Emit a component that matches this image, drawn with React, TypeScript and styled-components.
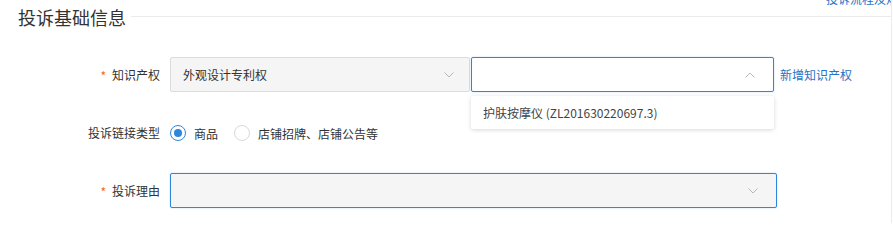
import React from "react";
import styled, { createGlobalStyle } from "styled-components";

const Global = createGlobalStyle`
  html, body { margin: 0; padding: 0; background: #fff; }
  body { font-family: "Noto Sans CJK SC", "Noto Sans", sans-serif; color: #333; }
`;

const BLUE = "#2f87dc";
const LINK = "#2672c6";

const Page = styled.div`
  position: relative;
  width: 891px;
  height: 223px;
  border-right: 1px solid #ececec;
  overflow: hidden;
`;

const TopLink = styled.a`
  position: absolute;
  top: -9px;
  left: 826px;
  font-size: 12px;
  line-height: 16px;
  color: ${LINK};
  white-space: nowrap;
  text-decoration: none;
`;

const Header = styled.div`
  display: flex;
  align-items: center;
  padding: 5px 0 0 18px;
  height: 24px;
`;

const Title = styled.h2`
  margin: 0;
  font-size: 18px;
  line-height: 24px;
  font-weight: 400;
  color: #333;
  white-space: nowrap;
`;

const Rule = styled.div`
  flex: 1;
  margin-left: 5px;
  margin-top: -2px;
  border-top: 1px solid #ebebeb;
`;

const Form = styled.div`
  display: flex;
  flex-direction: column;
`;

const Item = styled.div<{ $mt: number; $h: number }>`
  display: flex;
  align-items: center;
  margin-top: ${(p) => p.$mt}px;
  height: ${(p) => p.$h}px;
`;

const Label = styled.div`
  width: 160px;
  flex: none;
  display: flex;
  justify-content: flex-end;
  align-items: center;
  font-size: 12px;
  line-height: 16px;
  color: #333;
  white-space: nowrap;
  margin-right: 10px;
`;

const Star = styled.span`
  color: #f60;
  font-size: 12px;
  margin-right: 6px;
  line-height: 12px;
  padding-top: 3px;
`;

const SelectBox = styled.div<{ $w: number; $active?: boolean; $bg?: string }>`
  position: relative;
  box-sizing: border-box;
  width: ${(p) => p.$w}px;
  height: 35px;
  display: flex;
  align-items: center;
  padding: 0 12px;
  background: ${(p) => p.$bg || "#f5f5f5"};
  border: 1px solid ${(p) => (p.$active ? BLUE : "#dcdcdc")};
  border-radius: 2px;
  font-size: 12px;
  color: #333;
  ${(p) => (p.$active ? "box-shadow: 0 0 2px rgba(47,135,220,0.35);" : "")}
`;

const SelectText = styled.span`
  flex: 1;
  white-space: nowrap;
`;

const Arrow = styled.svg<{ $r: number }>`
  position: absolute;
  right: ${(p) => p.$r}px;
  top: 50%;
  margin-top: -3px;
  width: 10px;
  height: 6px;
`;

const Gap = styled.div<{ $w: number }>`
  width: ${(p) => p.$w}px;
  flex: none;
`;

const AddLink = styled.a`
  margin-left: 6px;
  font-size: 12px;
  color: ${LINK};
  white-space: nowrap;
  text-decoration: none;
`;

const Menu = styled.div`
  position: absolute;
  left: -1px;
  right: -1px;
  top: 38px;
  height: 33px;
  background: #fff;
  box-shadow: 0 1px 4px rgba(0, 0, 0, 0.16);
  border-radius: 2px;
  display: flex;
  align-items: center;
  padding-left: 12px;
  font-size: 12px;
  color: #444;
  white-space: nowrap;
  z-index: 2;
`;

const RadioGroup = styled.div`
  display: flex;
  align-items: center;
`;

const RadioOption = styled.label`
  display: flex;
  align-items: center;
  margin-right: 16px;
  font-size: 12px;
  color: #333;
  white-space: nowrap;
`;

const RadioCircle = styled.span<{ $checked?: boolean }>`
  box-sizing: border-box;
  width: 16px;
  height: 16px;
  border-radius: 50%;
  border: 1px solid ${(p) => (p.$checked ? BLUE : "#d9d9d9")};
  background: #fff;
  display: flex;
  align-items: center;
  justify-content: center;
  margin-right: 8px;
  &::after {
    content: "";
    width: 8px;
    height: 8px;
    border-radius: 50%;
    background: ${(p) => (p.$checked ? BLUE : "transparent")};
  }
`;

const ChevronDown = ({ r }: { r: number }) => (
  <Arrow $r={r} viewBox="0 0 10 6">
    <path d="M0.5 0.5 L5 5 L9.5 0.5" fill="none" stroke="#b8b8b8" strokeWidth="1" />
  </Arrow>
);

const ChevronUp = ({ r }: { r: number }) => (
  <Arrow $r={r} viewBox="0 0 10 6">
    <path d="M0.5 5.5 L5 1 L9.5 5.5" fill="none" stroke="#b8b8b8" strokeWidth="1" />
  </Arrow>
);

export default function App() {
  return (
    <>
      <Global />
      <Page>
        <TopLink>投诉流程及规则</TopLink>
        <Header>
          <Title>投诉基础信息</Title>
          <Rule />
        </Header>
        <Form>
          <Item $mt={28} $h={35}>
            <Label>
              <Star>*</Star>知识产权
            </Label>
            <SelectBox $w={300}>
              <SelectText>外观设计专利权</SelectText>
              <ChevronDown r={15} />
            </SelectBox>
            <Gap $w={1} />
            <SelectBox $w={303} $active $bg="#fff">
              <SelectText />
              <ChevronUp r={18} />
              <Menu>护肤按摩仪 (ZL201630220697.3)</Menu>
            </SelectBox>
            <AddLink>新增知识产权</AddLink>
          </Item>
          <Item $mt={31} $h={20}>
            <Label>投诉链接类型</Label>
            <RadioGroup>
              <RadioOption>
                <RadioCircle $checked />
                商品
              </RadioOption>
              <RadioOption>
                <RadioCircle />
                店铺招牌、店铺公告等
              </RadioOption>
            </RadioGroup>
          </Item>
          <Item $mt={30} $h={35}>
            <Label>
              <Star>*</Star>投诉理由
            </Label>
            <SelectBox $w={607} $active>
              <SelectText />
              <ChevronDown r={18} />
            </SelectBox>
          </Item>
        </Form>
      </Page>
    </>
  );
}
